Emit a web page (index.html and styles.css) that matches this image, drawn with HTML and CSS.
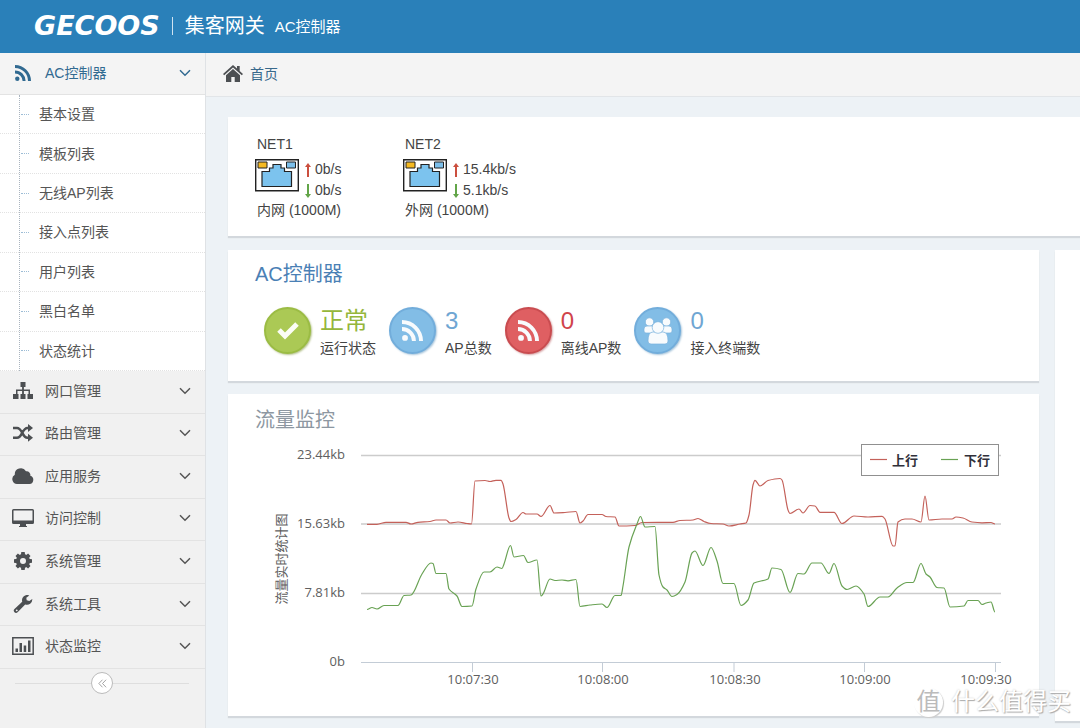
FILE: index.html
```html
<!DOCTYPE html>
<html lang="zh-CN">
<head>
<meta charset="utf-8">
<title>集客网关 AC控制器</title>
<link rel="stylesheet" href="styles.css">
</head>
<body>
<svg class="defs" aria-hidden="true">
  <symbol id="chevron" viewBox="0 0 12 8"><path d="M1 1.200L6 6.200L11 1.200" fill="none" stroke="currentColor" stroke-width="1.500"/></symbol>
  <symbol id="rss" viewBox="0 0 16 16"><circle cx="2.300" cy="13.700" r="2.200"/><path d="M0 5.400v3a7.600 7.600 0 0 1 7.600 7.600h3A10.600 10.600 0 0 0 0 5.400zM0 0v3a13 13 0 0 1 13 13h3A16 16 0 0 0 0 0z"/></symbol>
  <symbol id="port" viewBox="0 0 44 33">
    <path d="M.7.700h42.600v31.100H.7z" fill="#fff" stroke="#222" stroke-width="1.400"/>
    <path d="M3 3h9v6H3z" fill="#f5b921" stroke="#222"/>
    <path d="M31.500 3h9v6h-9z" fill="#7cbfea" stroke="#222"/>
    <path d="M7 27.500v-15h7.500V9H18V5.500h8V9h3.500v3.500H36.500v15z" fill="#7cc3ee" stroke="#222" stroke-width="1.200"/>
  </symbol>
  <symbol id="arrow" viewBox="0 0 6 14"><path d="M3 0L6 4H4v10H2V4H0z"/></symbol>
</svg>

<header class="topbar">
  <span class="logo">GECOOS</span>
  <span class="divider"></span>
  <span class="product">集客网关</span>
  <span class="module">AC控制器</span>
</header>

<div class="layout">
  <aside class="sidebar">
    <nav>
      <button class="menu active" type="button" aria-expanded="true">
        <svg class="menu-icon small" viewBox="0 0 16 16"><use href="#rss"/></svg><span>AC控制器</span><svg class="chev"><use href="#chevron"/></svg>
      </button>
      <ul class="submenu">
        <li><a href="#">基本设置</a></li>
        <li><a href="#">模板列表</a></li>
        <li><a href="#">无线AP列表</a></li>
        <li><a href="#">接入点列表</a></li>
        <li><a href="#">用户列表</a></li>
        <li><a href="#">黑白名单</a></li>
        <li><a href="#">状态统计</a></li>
      </ul>
      <div class="menus">
        <button class="menu" type="button">
          <svg class="menu-icon" viewBox="0 0 20 18"><path d="M7.500 0h5v5h-1.600v2.500H17V12h3v5h-5.500v-5h1V9h-4.600v3h1.600v5h-5v-5h1.600V9H4.500v3h1v5H0v-5h3V7.500h6.100V5H7.500z"/></svg><span>网口管理</span><svg class="chev"><use href="#chevron"/></svg>
        </button>
        <button class="menu" type="button">
          <svg class="menu-icon" viewBox="0 0 20 18"><path d="M0 4h4c5.500 0 5 9.800 10.500 9.800H16M0 13.800h4c5.500 0 5-9.800 10.500-9.800H16" fill="none" stroke="currentColor" stroke-width="2.500"/><path d="M15 0l5 4-5 4zM15 9.800l5 4-5 4z"/></svg><span>路由管理</span><svg class="chev"><use href="#chevron"/></svg>
        </button>
        <button class="menu" type="button">
          <svg class="menu-icon" viewBox="0 0 22 18"><path d="M5 17a5 5 0 0 1-2.200-9.300A6 6 0 0 1 14 4.300a3.700 3.700 0 0 1 4.300 4.500A4.200 4.200 0 0 1 17.500 17z"/></svg><span>应用服务</span><svg class="chev"><use href="#chevron"/></svg>
        </button>
        <button class="menu" type="button">
          <svg class="menu-icon" viewBox="0 0 22 18"><path d="M1.500 0h19A1.500 1.500 0 0 1 22 1.500v12a1.500 1.500 0 0 1-1.500 1.500H14v2h1v1H7v-1h1v-2H1.500A1.500 1.500 0 0 1 0 13.500v-12A1.500 1.500 0 0 1 1.500 0zm0 1.500v10h19v-10z" fill-rule="evenodd"/></svg><span>访问控制</span><svg class="chev"><use href="#chevron"/></svg>
        </button>
        <button class="menu" type="button">
          <svg class="menu-icon" viewBox="0 0 20 18"><circle cx="10" cy="9" r="5" fill="none" stroke="currentColor" stroke-width="4"/><path d="M8.300 0h3.400l.5 3.500H7.800zM8.300 18h3.400l.5-3.500H7.800zM1 7.300v3.400l3.500.5V6.800zM19 7.300v3.400l-3.500.5V6.800zM2.500 4l2.400-2.400 2.800 2.100-3.100 3.100zM17.500 4l-2.400-2.400-2.800 2.100 3.100 3.100zM2.500 14l2.400 2.400 2.800-2.100-3.100-3.100zM17.500 14l-2.400 2.400-2.800-2.100 3.100-3.100z"/></svg><span>系统管理</span><svg class="chev"><use href="#chevron"/></svg>
        </button>
        <button class="menu" type="button">
          <svg class="menu-icon" viewBox="0 0 20 18"><path d="M1.500 14l7.700-7.300A5.300 5.300 0 0 1 16.300.4l-3 2.400.4 2.500 2.600.8 3-2a5.300 5.300 0 0 1-7.100 5.300L4.600 17.200A2.200 2.200 0 0 1 1.500 14zm1.600.7a.9.900 0 1 0 1.300 1.300.9.900 0 0 0-1.300-1.300z" fill-rule="evenodd"/></svg><span>系统工具</span><svg class="chev"><use href="#chevron"/></svg>
        </button>
        <button class="menu" type="button">
          <svg class="menu-icon" viewBox="0 0 22 18"><path d="M.8.800h20.400v16.400H.8z" fill="none" stroke="currentColor" stroke-width="1.500"/><path d="M3.500 11.500H6V15H3.500zM7.500 6H10v9H7.500zM11.700 8.500h2.500V15h-2.500zM16 3.500h2.500V15H16z"/></svg><span>状态监控</span><svg class="chev"><use href="#chevron"/></svg>
        </button>
      </div>
    </nav>
    <div class="collapse">
      <button type="button" aria-label="收起菜单"><svg viewBox="0 0 10 10"><path d="M5 .8L1 5l4 4.200M9 .8L5 5l4 4.200" fill="none" stroke="currentColor"/></svg></button>
    </div>
  </aside>

  <main class="main">
    <div class="crumbs">
      <svg class="home" viewBox="0 0 20 17"><path d="M10 0l4 3.600V1h2.700v5l3.300 3-1.200 1.200L10 2.400 1.200 10.200 0 9zM10 4l7 6.200V17h-5.300v-5H8.300v5H3v-6.800z"/></svg>
      <a href="#">首页</a>
    </div>
    <div class="content">
      <section class="panel ports">
        <div class="port">
          <span class="port-name">NET1</span>
          <div class="port-row">
            <svg class="port-icon"><use href="#port"/></svg>
            <div class="rates">
              <span><svg class="arrow up"><use href="#arrow"/></svg>0b/s</span>
              <span><svg class="arrow down"><use href="#arrow"/></svg>0b/s</span>
            </div>
          </div>
          <span class="port-name">内网 (1000M)</span>
        </div>
        <div class="port">
          <span class="port-name">NET2</span>
          <div class="port-row">
            <svg class="port-icon"><use href="#port"/></svg>
            <div class="rates">
              <span><svg class="arrow up"><use href="#arrow"/></svg>15.4kb/s</span>
              <span><svg class="arrow down"><use href="#arrow"/></svg>5.1kb/s</span>
            </div>
          </div>
          <span class="port-name">外网 (1000M)</span>
        </div>
      </section>

      <div class="columns">
        <div class="column">
          <section class="panel status">
            <h2 class="blue-title">AC控制器</h2>
            <div class="stats">
              <div class="stat green">
                <span class="disc"><svg viewBox="0 0 24 20"><path d="M3 9l6 6L21 3" fill="none" stroke="#fbfdf5" stroke-width="5"/></svg></span>
                <div><strong>正常</strong><span>运行状态</span></div>
              </div>
              <div class="stat blue">
                <span class="disc"><svg class="signal" viewBox="0 0 16 16"><use href="#rss"/></svg></span>
                <div><strong>3</strong><span>AP总数</span></div>
              </div>
              <div class="stat red">
                <span class="disc"><svg class="signal" viewBox="0 0 16 16"><use href="#rss"/></svg></span>
                <div><strong>0</strong><span>离线AP数</span></div>
              </div>
              <div class="stat blue">
                <span class="disc"><svg class="people" viewBox="0 0 30 28"><g stroke="#7ab2dc" stroke-width=".7"><circle cx="6.500" cy="5" r="4.200"/><circle cx="23.500" cy="5" r="4.200"/><path d="M1 12q0-3 3-3h7v7H3q-2 0-2-2zM29 12q0-3-3-3h-7v7h8q2 0 2-2z"/><path d="M5 24q0-9 5-9h10q5 0 5 9 0 3-3 3H8q-3 0-3-3z"/><circle cx="15" cy="10.500" r="5.800"/></g></svg></span>
                <div><strong>0</strong><span>接入终端数</span></div>
              </div>
            </div>
          </section>

          <section class="panel traffic">
            <h2 class="gray-title">流量监控</h2>
            <svg class="chart" viewBox="228 440 811 276" role="img" aria-label="流量实时统计图">
              <g class="grid"><path d="M361 455.500H1001M361 524H1001M361 593.500H1001"/></g>
              <path class="axis" d="M361 662.500H1001M472.500 662v10M602.500 662v10M734 662v10M864.500 662v10M995.500 662v10"/>
              <g class="y-labels">
                <text x="345" y="459">23.44kb</text>
                <text x="345" y="528">15.63kb</text>
                <text x="345" y="597">7.81kb</text>
                <text x="345" y="666">0b</text>
              </g>
              <g class="x-labels">
                <text x="473" y="684">10:07:30</text>
                <text x="603" y="684">10:08:00</text>
                <text x="735" y="684">10:08:30</text>
                <text x="865" y="684">10:09:00</text>
                <text x="986" y="684">10:09:30</text>
              </g>
              <text class="y-title" transform="translate(286 559) rotate(-90)">流量实时统计图</text>
              <path class="line up-line" id="up"/>
              <path class="line down-line" id="down"/>
              <rect class="legend-box" x="861.500" y="444.500" width="137" height="31"/>
              <path class="line up-line" d="M870 459.500h17"/>
              <path class="line down-line" d="M941 459.500h17"/>
              <g class="legend-text"><text x="892" y="465">上行</text><text x="964" y="465">下行</text></g>
            </svg>
          </section>
        </div>
        <section class="panel side"></section>
      </div>
    </div>
  </main>
</div>

<div class="watermark"><span class="mark">值</span><span>什么值得买</span></div>
<script src="chart.js"></script>
</body>
</html>
```
FILE: styles.css
```css
* { box-sizing: border-box; }

body {
  margin: 0;
  min-height: 100vh;
  display: flex;
  flex-direction: column;
  overflow: hidden;
  background: #edf2f6;
  color: #444;
  font: 14px/20px "Liberation Sans", "Noto Sans CJK SC", sans-serif;
}

a { color: inherit; text-decoration: none; }
button { font: inherit; color: inherit; cursor: pointer; }
svg { fill: currentColor; flex: none; }
h2 { margin: 0; font-weight: 400; font-size: 20px; line-height: 28px; }
.defs { position: absolute; width: 0; height: 0; }

.topbar {
  display: flex;
  align-items: center;
  height: 53px;
  padding: 0 0 2px 34px;
  background: #2a80b9;
  color: #fff;
}
.logo { font: italic 700 27px/32px "DejaVu Sans", sans-serif; }
.divider { width: 1px; height: 18px; margin: 0 12px; background: #cfe3f1; }
.product { font-size: 20px; }
.module { margin-left: 10px; padding-top: 2px; font-size: 15px; }

.layout { display: flex; flex: 1; }

.sidebar {
  flex: 0 0 206px;
  background: #f1f1f1;
  border-right: 1px solid #dfe2e5;
  color: #555;
}
.menu {
  display: flex;
  align-items: center;
  width: 100%;
  padding: 0 14px 2px 12px;
  border: 0;
  border-bottom: 1px solid #e3e3e3;
  background: #f1f1f1;
  text-align: left;
}
.menu span { flex: 1; margin-left: 11px; }
.menu.active { height: 42px; background: #f4f4f4; color: #316a91; }
.menu-icon { width: 22px; height: 18px; color: #4c4f52; }
.menu-icon.small { height: 16px; color: #316a91; }
.chev { width: 12px; height: 8px; }
.menus { display: grid; grid-auto-rows: 1fr; min-height: 298px; }

.submenu {
  position: relative;
  display: grid;
  grid-auto-rows: 1fr;
  min-height: 276px;
  margin: 0;
  padding: 0;
  list-style: none;
  background: #fff;
}
.submenu::before {
  content: "";
  position: absolute;
  top: 0;
  bottom: 0;
  left: 19px;
  border-left: 1px dotted #a9b4bf;
}
.submenu li { display: flex; align-items: center; border-bottom: 1px dotted #e2e2e2; }
.submenu li::before { content: ""; width: 8px; margin-left: 21px; border-top: 1px dotted #9dbdd6; }
.submenu a { flex: 1; margin-left: 10px; }

.collapse {
  display: flex;
  align-items: center;
  margin: 3px 16px 0 15px;
}
.collapse::before, .collapse::after { content: ""; flex: 1; border-top: 1px solid #dedede; }
.collapse button {
  display: grid;
  place-items: center;
  width: 22px;
  height: 22px;
  padding: 0;
  border: 1px solid #bbb;
  border-radius: 50%;
  background: #fff;
  color: #999;
}
.collapse svg { width: 9px; height: 9px; }

.main { flex: 1; min-width: 0; }
.crumbs {
  display: flex;
  align-items: center;
  gap: 7px;
  height: 44px;
  padding: 0 0 3px 17px;
  background: #f4f4f4;
  border-bottom: 1px solid #e2e5e8;
}
.crumbs a { color: #38698c; padding-top: 2px; }
.home { width: 20px; height: 17px; color: #4c4f52; }

.content { padding: 20px 0 0 22px; }
.panel { background: #fff; box-shadow: 0 2px 1px #d3d8dd; }
.ports { display: flex; gap: 49px; height: 119px; padding: 17px 27px 0; }
.port { display: flex; flex-direction: column; width: 99px; white-space: nowrap; }
.port-name { padding-left: 2px; }
.port-row { display: flex; align-items: flex-start; gap: 6px; height: 46px; padding-top: 5px; }
.port-icon { width: 44px; height: 33px; }
.rates span { display: flex; align-items: center; gap: 4px; line-height: 21px; }
.arrow { width: 6px; height: 14px; }
.up { color: #cb4f3e; }
.down { color: #62a548; transform: rotate(180deg); }

.columns { display: grid; grid-template-columns: minmax(0, 1fr) 25px; align-items: start; gap: 16px; margin-top: 14px; }
.column { display: grid; gap: 13px; }
.side { min-height: 471px; }

.status { height: 131px; padding: 10px 27px; }
.blue-title { color: #4a80b5; }
.gray-title { color: #8d97a1; padding-left: 27px; }
.stats { display: flex; gap: 13px; margin: 15px 0 0 9px; }
.stat { display: flex; gap: 9px; white-space: nowrap; }
.stat strong, .stat div span { display: block; }
.stat strong { font-size: 24px; font-weight: 400; line-height: 36px; }
.disc {
  display: grid;
  place-items: center;
  width: 47px;
  height: 47px;
  border-radius: 50%;
  margin-top: 4px;
  color: #f8fbfd;
}
.stat div span { margin-top: -1px; }
.disc svg { width: 24px; height: 20px; }
.disc .signal { width: 21px; height: 21px; }
.disc .people { width: 30px; height: 28px; }
.green strong { color: #95b63b; }
.green .disc { background: #abc955; border: 2px solid #9bbc44; box-shadow: 1px 1px 2px #b7c490; }
.blue strong { color: #6fa6d3; }
.blue .disc { background: #82bde6; border: 2px solid #72addb; box-shadow: 1px 1px 2px #a9c6dc; }
.red strong { color: #d0444b; }
.red .disc { background: #df5f62; border: 2px solid #c94c50; box-shadow: 1px 1px 2px #d7a3a5; }

.traffic { padding-top: 12px; }
.chart { display: block; width: 100%; margin-top: 6px; font: 13px "Open Sans", "Noto Sans CJK SC", sans-serif; fill: #606060; }
.grid path { stroke: #ccc; stroke-width: 1.5; }
.axis { stroke: #c3ccd6; fill: none; }
.y-labels { text-anchor: end; }
.x-labels, .y-title { text-anchor: middle; }
.line { fill: none; stroke-width: 1.2; }
.up-line { stroke: #c4615a; }
.down-line { stroke: #69a254; }
.legend-box { fill: #fff; stroke: #909090; }
.legend-text { font-weight: 700; fill: #30303a; }

.watermark {
  position: absolute;
  right: 9px;
  bottom: 10px;
  display: flex;
  align-items: center;
  gap: 8px;
  color: #fff;
  font-size: 24px;
  line-height: 32px;
  text-shadow: 1px 1px 1px #aaa, 0 0 2px #ccc;
}
.mark {
  width: 29px;
  height: 29px;
  border-radius: 50%;
  background: #fff;
  box-shadow: 1px 1px 1px #ccc;
  color: #bbb;
  line-height: 28px;
  text-align: center;
  text-shadow: none;
}
```
FILE: chart.js
```js
const series = {
  up: "367,524.3 377,524.3 386,522.3 406,522.3 411,524 418,522.3 430,521.5 436,520 446,520 450,523 458,522 467,523.5 471.5,524 475,481 485,480.5 490,481.5 496,480.3 501,480.3 503,484 509,518 511,521.5 516,519.5 523,512.5 526,514 537,514 541,516.5 550,505.5 554,513 565,512.5 576,511.5 580,523 583,521 588,514.5 602,514.5 606,516.5 615,517 619,526 635,525.5 642,522.5 673,522.3 680,520.5 693,520 698,518.5 704,521.5 711,523.5 723,524 729,526 740,524 746,523 749,515 753,485 755,480.3 760,486 768,480.5 780,478.5 782,480 788,510 790,513.5 799,509 803,513 810,505.5 815,506 820,512.3 834,512.3 842,523.5 854,516 868,517 882,516.3 885,519 893,546 895,546 898,522 905,519 912,519 921,522 925,496 929,520 942,519 952,519 956,517 963,518 972,522 982,522.8 991,522.5 995,524",
  down: "367,609.5 372,607.5 377,609 384,605.5 398,605.5 404,595.5 411,595 422,574 431,563 433,563.5 436,573.5 446,573.5 449,589 457,596 462,606.5 472,606 476,589 484,572 490,572 497,567 502,568.5 504,564 510.5,545.5 514,557 523.5,555.5 528,562.5 537,560 541,596 543,594 550,579 555,580.5 562,580 568,580.8 576,579.5 580,606.5 590,605 602,604 607,607.5 615,595.5 621,595.5 623,586 629,547 637,524 640.5,516.5 645,527 655,526.5 659,575 663,587 667,590 672,596.5 677,594.5 685,582 692,553 695,551 703,565.5 711,547.5 717,561 723,583.5 734,583.5 741,605.5 748,600 754,583 768,579 772,568 781,569.5 790,592.5 798,573.5 804,574 812,563 821,563 829,573.5 834,563.5 842,586 847,589.5 856,586 864,594 868,606.5 880,597 888,597 897,588 907,582.5 913,582.5 921,563.5 926,574 930,577 937,587.5 944,588 950,607 964,606 968,600.5 978,600.5 982,604.5 986,603 991,602 995,612"
};

// Monotone cubic interpolation: smooth joins without overshooting the samples.
function smoothPath(text) {
  const p = text.split(" ").map(s => s.split(",").map(Number));
  const slope = i => (p[i + 1][1] - p[i][1]) / (p[i + 1][0] - p[i][0]);
  const tangent = p.map((_, i) => {
    if (i === 0 || i === p.length - 1) return 0;
    const a = slope(i - 1), b = slope(i);
    return a * b <= 0 ? 0 : 2 * a * b / (a + b);
  });
  let d = "M" + p[0];
  for (let i = 1; i < p.length; i++) {
    const h = (p[i][0] - p[i - 1][0]) / 3;
    d += ` C${p[i - 1][0] + h},${p[i - 1][1] + tangent[i - 1] * h} ${p[i][0] - h},${p[i][1] - tangent[i] * h} ${p[i]}`;
  }
  return d;
}

for (const id in series) {
  document.getElementById(id).setAttribute("d", smoothPath(series[id]));
}
```
